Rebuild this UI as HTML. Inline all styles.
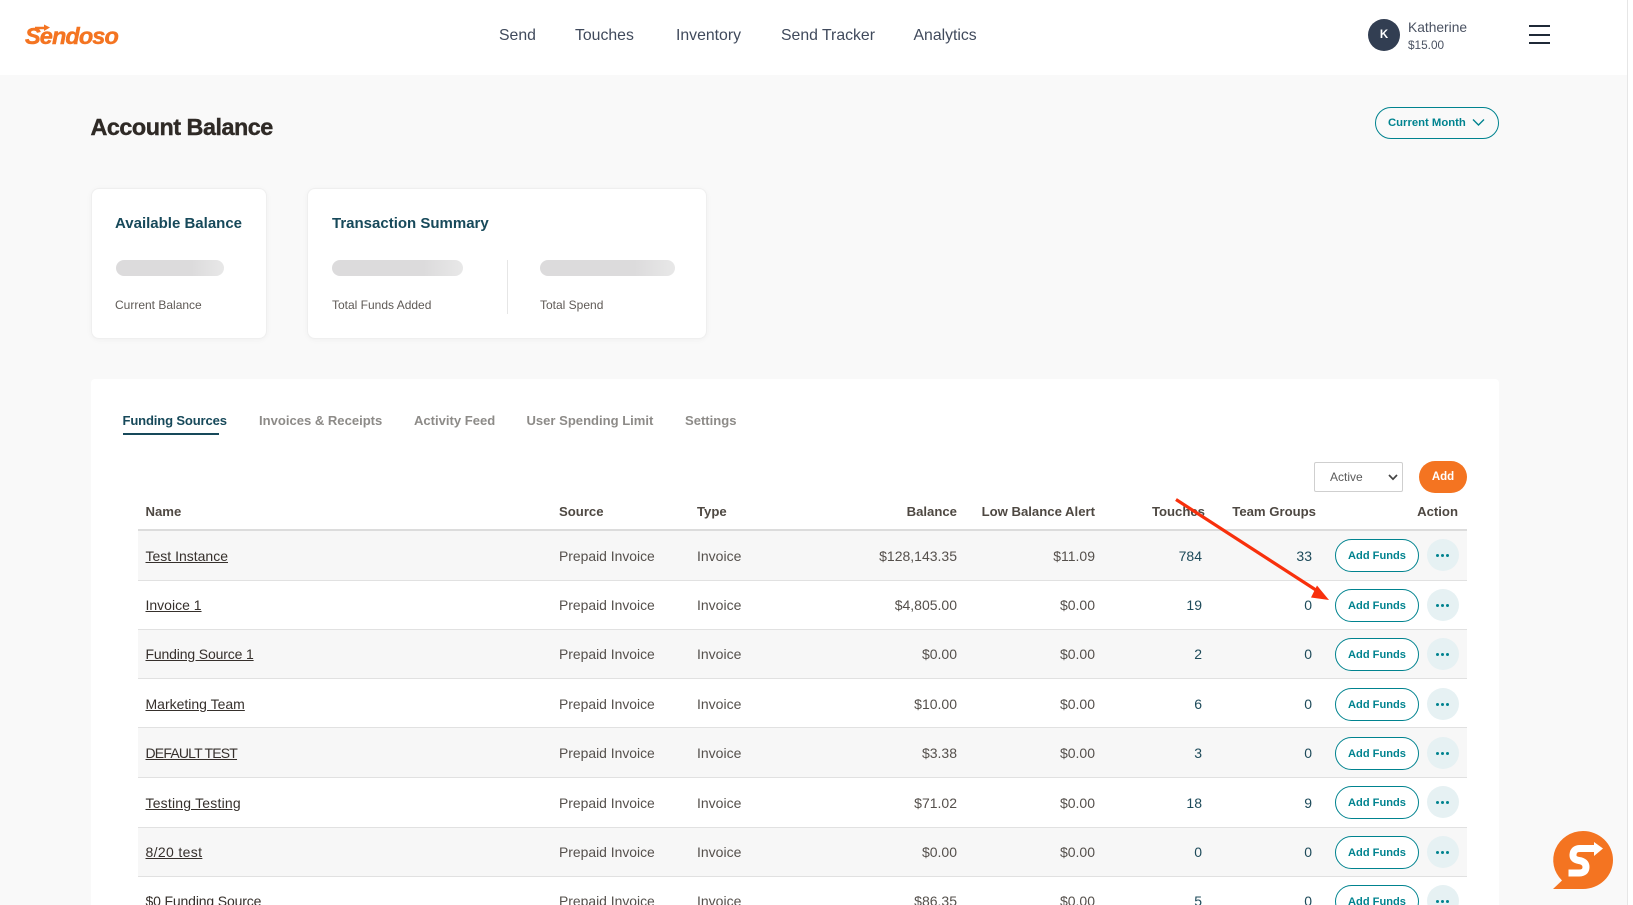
<!DOCTYPE html>
<html lang="en"><head><meta charset="utf-8"><title>Account Balance</title>
<style>
*{box-sizing:border-box}
html,body{margin:0;padding:0;width:1633px;height:905px;overflow:hidden;background:#fff}
body{position:relative;font-family:"Liberation Sans",sans-serif;color:#3a3530}
.a{position:absolute;white-space:nowrap}
#bg{position:absolute;left:0;top:75px;width:1627px;height:830px;background:#f9f9f9}
#sb{position:absolute;left:1627px;top:0;width:1px;height:905px;background:#e6e6e6}
.nav{position:absolute;top:25px;line-height:22px;font-size:15.8px;color:#404a5c;white-space:nowrap}
.card{position:absolute;background:#fff;border-radius:8px;border:1px solid #efefef;box-shadow:0 1px 6px rgba(0,0,0,.04)}
.ct{position:absolute;top:214px;line-height:20px;font-size:15px;font-weight:700;color:#17495a;white-space:nowrap}
.sk{position:absolute;top:260px;height:16px;border-radius:8px;background:linear-gradient(90deg,#dcdbdc 0%,#dcdbdc 70%,#e8e8e8 100%)}
.lb{position:absolute;top:297px;line-height:16px;font-size:12px;color:#5f5a56;white-space:nowrap}
.tab{position:absolute;top:411px;line-height:20px;font-size:13.05px;font-weight:700;color:#8d8b88;white-space:nowrap}
.th{position:absolute;top:502px;line-height:20px;font-size:13.15px;font-weight:700;color:#4e4842;white-space:nowrap}
.r{position:absolute;left:138px;width:1329px;height:50px;border-bottom:1px solid #e1e1e1}
.g{background:#f7f7f7}
.c{position:absolute;top:15px;line-height:20px;font-size:14px;white-space:nowrap;color:#55504c}
.u .c{top:14px}
.n{left:7.5px;color:#36302c;text-decoration:underline}
.s{left:421px;font-size:13.9px}.t{left:559px}
.b{right:510px;text-align:right}.l{right:372px;text-align:right}
.tc{right:265px;text-align:right;color:#1d4a5a}.tg{right:155px;text-align:right;color:#1d4a5a}
.af{position:absolute;left:1197px;top:var(--b,8px);width:84px;height:33px;border:1.5px solid #00838f;border-radius:17px;background:#fff;color:#00838f;font-size:11.1px;font-weight:700;text-align:center;line-height:32px;white-space:nowrap}
.dt{position:absolute;left:1289px;top:var(--b,8px);width:32px;height:32px;border-radius:50%;background:#e6f1f3}
.dt i{position:absolute;top:14.5px;width:3px;height:3px;border-radius:50%;background:#00838f}
.dt i:nth-child(1){left:9px}.dt i:nth-child(2){left:14px}.dt i:nth-child(3){left:19px}
</style></head><body>
<div id="bg"></div><div id="sb"></div>

<div class="a" style="left:25px;top:22px;font-size:23.5px;line-height:28px;font-weight:700;font-style:italic;color:#f47421;letter-spacing:-.9px;-webkit-text-stroke:.5px #f47421">Sendoso</div>
<svg class="a" style="left:30px;top:23px" width="22" height="10" viewBox="0 0 22 10"><path d="M5 5H15" stroke="#f47421" stroke-width="2.5" fill="none"/><path d="M14 1.5L20 4.5L14 8Z" fill="#f47421"/></svg>

<div class="nav" style="left:499px">Send</div>
<div class="nav" style="left:575px">Touches</div>
<div class="nav" style="left:676px">Inventory</div>
<div class="nav" style="left:781px">Send Tracker</div>
<div class="nav" style="left:913.5px">Analytics</div>

<div class="a" style="left:1368px;top:19px;width:32px;height:32px;border-radius:50%;background:#323e52;color:#fff;font-size:11.5px;font-weight:700;line-height:32px;text-align:center">K</div>
<div class="a" style="left:1408px;top:19px;line-height:18px;font-size:13.8px;color:#4a5262">Katherine</div>
<div class="a" style="left:1408px;top:37px;line-height:16px;font-size:11.8px;color:#4a5262">$15.00</div>
<div class="a" style="left:1529px;top:25px;width:21px;height:2px;background:#1f2937"></div>
<div class="a" style="left:1529px;top:34px;width:21px;height:2px;background:#1f2937"></div>
<div class="a" style="left:1529px;top:42px;width:21px;height:2px;background:#1f2937"></div>

<div class="a" style="left:90.5px;top:112px;line-height:30px;font-size:23.4px;font-weight:700;color:#2f2a26;letter-spacing:-.5px;-webkit-text-stroke:.4px #2f2a26">Account Balance</div>

<div class="a" style="left:1375px;top:107px;width:124px;height:32px;border:1.3px solid #00838f;border-radius:16px"></div>
<div class="a" style="left:1388px;top:113px;line-height:20px;font-size:11.3px;font-weight:700;color:#00838f">Current Month</div>
<svg class="a" style="left:1472px;top:118px" width="13" height="9" viewBox="0 0 13 9"><path d="M1 1.5L6.5 7L12 1.5" fill="none" stroke="#00838f" stroke-width="1.4"/></svg>

<div class="card" style="left:91px;top:188px;width:176px;height:151px"></div>
<div class="card" style="left:307px;top:188px;width:400px;height:151px"></div>
<div class="ct" style="left:115px">Available Balance</div>
<div class="ct" style="left:332px">Transaction Summary</div>
<div class="sk" style="left:116px;width:108px"></div>
<div class="sk" style="left:332px;width:131px"></div>
<div class="sk" style="left:540px;width:135px"></div>
<div class="a" style="left:507px;top:260px;width:1px;height:54px;background:#e6e6e6"></div>
<div class="lb" style="left:115px">Current Balance</div>
<div class="lb" style="left:332px">Total Funds Added</div>
<div class="lb" style="left:540px">Total Spend</div>

<div class="a" style="left:91px;top:379px;width:1408px;height:526px;background:#fff;border-radius:4px 4px 0 0"></div>
<div class="tab" style="left:122.5px;color:#17495a;letter-spacing:-.15px">Funding Sources</div>
<div class="a" style="left:123px;top:433px;width:96px;height:2px;background:#17495a"></div>
<div class="tab" style="left:259px">Invoices &amp; Receipts</div>
<div class="tab" style="left:414px">Activity Feed</div>
<div class="tab" style="left:526.5px">User Spending Limit</div>
<div class="tab" style="left:685px">Settings</div>

<div class="a" style="left:1314px;top:462px;width:89px;height:30px;border:1px solid #cfcfcf;border-radius:2px;background:#fff"></div>
<div class="a" style="left:1330px;top:467px;line-height:20px;font-size:12px;color:#5a5a5a">Active</div>
<svg class="a" style="left:1388px;top:474px" width="10" height="7" viewBox="0 0 10 7"><path d="M1 1L5 5.2L9 1" fill="none" stroke="#444" stroke-width="1.7"/></svg>
<div class="a" style="left:1419px;top:461px;width:48px;height:32px;border-radius:16px;background:#f47421;color:#fff;font-size:11.5px;font-weight:700;line-height:33px;text-align:center">Add</div>

<div class="th" style="left:145.5px">Name</div>
<div class="th" style="left:559px">Source</div>
<div class="th" style="left:697px">Type</div>
<div class="th" style="right:676px">Balance</div>
<div class="th" style="right:538px">Low Balance Alert</div>
<div class="th" style="right:428px">Touches</div>
<div class="th" style="right:317px">Team Groups</div>
<div class="th" style="right:175px">Action</div>
<div class="a" style="left:138px;top:529px;width:1329px;height:2px;background:#dcdcdc"></div>

<div class="r g" style="top:531px"><span class="c n">Test Instance</span><span class="c s">Prepaid Invoice</span><span class="c t">Invoice</span><span class="c b">$128,143.35</span><span class="c l">$11.09</span><span class="c tc">784</span><span class="c tg">33</span><div class="af">Add Funds</div><div class="dt"><i></i><i></i><i></i></div></div>
<div class="r u" style="top:581px;height:49px"><span class="c n">Invoice 1</span><span class="c s">Prepaid Invoice</span><span class="c t">Invoice</span><span class="c b">$4,805.00</span><span class="c l">$0.00</span><span class="c tc">19</span><span class="c tg">0</span><div class="af">Add Funds</div><div class="dt"><i></i><i></i><i></i></div></div>
<div class="r g u" style="top:630px;height:49px"><span class="c n" style="letter-spacing:-.15px">Funding Source 1</span><span class="c s">Prepaid Invoice</span><span class="c t">Invoice</span><span class="c b">$0.00</span><span class="c l">$0.00</span><span class="c tc">2</span><span class="c tg">0</span><div class="af">Add Funds</div><div class="dt"><i></i><i></i><i></i></div></div>
<div class="r" style="top:679px;height:49px;--b:9px"><span class="c n">Marketing Team</span><span class="c s">Prepaid Invoice</span><span class="c t">Invoice</span><span class="c b">$10.00</span><span class="c l">$0.00</span><span class="c tc">6</span><span class="c tg">0</span><div class="af">Add Funds</div><div class="dt"><i></i><i></i><i></i></div></div>
<div class="r g" style="top:728px;height:50px;--b:9px"><span class="c n" style="letter-spacing:-.8px">DEFAULT TEST</span><span class="c s">Prepaid Invoice</span><span class="c t">Invoice</span><span class="c b">$3.38</span><span class="c l">$0.00</span><span class="c tc">3</span><span class="c tg">0</span><div class="af">Add Funds</div><div class="dt"><i></i><i></i><i></i></div></div>
<div class="r" style="top:778px;height:50px"><span class="c n" style="letter-spacing:.2px">Testing Testing</span><span class="c s">Prepaid Invoice</span><span class="c t">Invoice</span><span class="c b">$71.02</span><span class="c l">$0.00</span><span class="c tc">18</span><span class="c tg">9</span><div class="af">Add Funds</div><div class="dt"><i></i><i></i><i></i></div></div>
<div class="r g u" style="top:828px;height:49px"><span class="c n" style="letter-spacing:.35px">8/20 test</span><span class="c s">Prepaid Invoice</span><span class="c t">Invoice</span><span class="c b">$0.00</span><span class="c l">$0.00</span><span class="c tc">0</span><span class="c tg">0</span><div class="af">Add Funds</div><div class="dt"><i></i><i></i><i></i></div></div>
<div class="r u" style="top:877px;height:50px;border:0"><span class="c n" style="letter-spacing:-.15px">$0 Funding Source</span><span class="c s">Prepaid Invoice</span><span class="c t">Invoice</span><span class="c b">$86.35</span><span class="c l">$0.00</span><span class="c tc">5</span><span class="c tg">0</span><div class="af">Add Funds</div><div class="dt"><i></i><i></i><i></i></div></div>

<svg class="a" style="left:0;top:0" width="1633" height="905" viewBox="0 0 1633 905">
<path d="M1176 499.5L1319 592" stroke="#f8300c" stroke-width="3.2" fill="none"/>
<path d="M1329 600L1317 585.5L1311 597.5Z" fill="#f8300c"/>
<path d="M1583 831a30 29 0 1 1 0 58H1553L1562 880.5A30 29 0 0 1 1583 831Z" fill="#f47421"/>
<path d="M1596 848.5H1580Q1573.5 848.5 1573 854.5Q1572.5 859.5 1579 860.5Q1586 861.5 1586 867Q1586 873 1579 873H1568.5" fill="none" stroke="#fff" stroke-width="7"/>
<path d="M1594 842L1603 848.5L1594 856Z" fill="#fff"/>
</svg>
</body></html>
